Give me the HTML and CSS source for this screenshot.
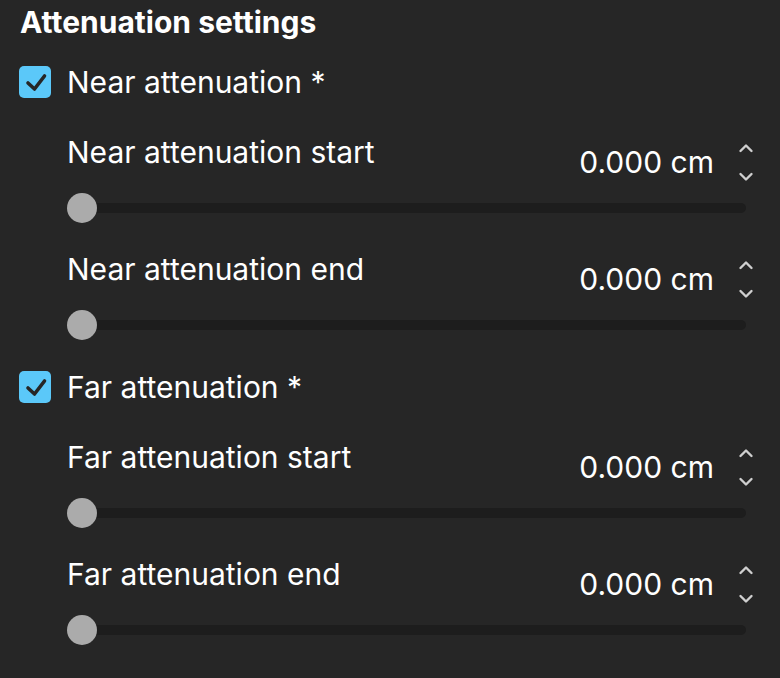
FILE: index.html
```html
<!DOCTYPE html>
<html>
<head>
<meta charset="utf-8">
<link rel="stylesheet" href="styles.css">
</head>
<body>
<div class="panel">
  <h2 class="title">Attenuation settings</h2>

  <div class="check-row">
    <span class="checkbox"><svg viewBox="0 0 32 32" width="32" height="32"><path d="M9 17 L15.5 23 L25.5 10" fill="none" stroke="#262626" stroke-width="3.6" stroke-linecap="round" stroke-linejoin="round"/></svg></span>
    <span class="check-label">Near attenuation *</span>
  </div>

  <div class="field">
    <div class="field-head">
      <span class="field-label">Near attenuation start</span>
      <span class="field-value">0.000 cm</span>
      <span class="spinner">
        <svg viewBox="0 0 16 10" width="16" height="10"><path d="M2.5 8 L8 2.5 L13.5 8" fill="none" stroke="#cfcfcf" stroke-width="2.4" stroke-linecap="round" stroke-linejoin="round"/></svg>
        <svg viewBox="0 0 16 10" width="16" height="10"><path d="M2.5 2 L8 7.5 L13.5 2" fill="none" stroke="#cfcfcf" stroke-width="2.4" stroke-linecap="round" stroke-linejoin="round"/></svg>
      </span>
    </div>
    <div class="slider"><span class="track"></span><span class="thumb"></span></div>
  </div>

  <div class="field">
    <div class="field-head">
      <span class="field-label">Near attenuation end</span>
      <span class="field-value">0.000 cm</span>
      <span class="spinner">
        <svg viewBox="0 0 16 10" width="16" height="10"><path d="M2.5 8 L8 2.5 L13.5 8" fill="none" stroke="#cfcfcf" stroke-width="2.4" stroke-linecap="round" stroke-linejoin="round"/></svg>
        <svg viewBox="0 0 16 10" width="16" height="10"><path d="M2.5 2 L8 7.5 L13.5 2" fill="none" stroke="#cfcfcf" stroke-width="2.4" stroke-linecap="round" stroke-linejoin="round"/></svg>
      </span>
    </div>
    <div class="slider"><span class="track"></span><span class="thumb"></span></div>
  </div>

  <div class="check-row">
    <span class="checkbox"><svg viewBox="0 0 32 32" width="32" height="32"><path d="M9 17 L15.5 23 L25.5 10" fill="none" stroke="#262626" stroke-width="3.6" stroke-linecap="round" stroke-linejoin="round"/></svg></span>
    <span class="check-label">Far attenuation *</span>
  </div>

  <div class="field">
    <div class="field-head">
      <span class="field-label">Far attenuation start</span>
      <span class="field-value">0.000 cm</span>
      <span class="spinner">
        <svg viewBox="0 0 16 10" width="16" height="10"><path d="M2.5 8 L8 2.5 L13.5 8" fill="none" stroke="#cfcfcf" stroke-width="2.4" stroke-linecap="round" stroke-linejoin="round"/></svg>
        <svg viewBox="0 0 16 10" width="16" height="10"><path d="M2.5 2 L8 7.5 L13.5 2" fill="none" stroke="#cfcfcf" stroke-width="2.4" stroke-linecap="round" stroke-linejoin="round"/></svg>
      </span>
    </div>
    <div class="slider"><span class="track"></span><span class="thumb"></span></div>
  </div>

  <div class="field">
    <div class="field-head">
      <span class="field-label">Far attenuation end</span>
      <span class="field-value">0.000 cm</span>
      <span class="spinner">
        <svg viewBox="0 0 16 10" width="16" height="10"><path d="M2.5 8 L8 2.5 L13.5 8" fill="none" stroke="#cfcfcf" stroke-width="2.4" stroke-linecap="round" stroke-linejoin="round"/></svg>
        <svg viewBox="0 0 16 10" width="16" height="10"><path d="M2.5 2 L8 7.5 L13.5 2" fill="none" stroke="#cfcfcf" stroke-width="2.4" stroke-linecap="round" stroke-linejoin="round"/></svg>
      </span>
    </div>
    <div class="slider"><span class="track"></span><span class="thumb"></span></div>
  </div>
</div>
</body>
</html>
```

FILE: styles.css
```css
html, body {
  margin: 0;
  padding: 0;
  background: #262626;
}
body {
  font-family: Inter, "Noto Sans", sans-serif;
  color: #ffffff;
  width: 780px;
  height: 678px;
  overflow: hidden;
}
.panel {
  padding: 4px 28px 0 19px;
  display: flex;
  flex-direction: column;
}
.title {
  margin: 0 0 26px 1px;
  font-size: 30px;
  font-weight: 700;
  line-height: 36px;
  height: 36px;
}
.check-row {
  display: flex;
  align-items: center;
  height: 32px;
  gap: 16px;
  margin-bottom: 36px;
}
.checkbox {
  width: 32px;
  height: 32px;
  border-radius: 5px;
  background: #5bc8f9;
  display: block;
}
.checkbox svg { display: block; }
.check-label {
  font-size: 30px;
  line-height: 36px;
}
.field {
  padding-left: 48px;
  margin-bottom: 28px;
}
.field:nth-of-type(3) { margin-bottom: 31px; }
.field-head {
  display: flex;
  align-items: flex-start;
  height: 50px;
}
.field-label {
  font-size: 30px;
  line-height: 36px;
  flex: 1;
}
.field-value {
  font-size: 30px;
  line-height: 36px;
  margin-top: 10px;
}
.spinner {
  width: 38px;
  display: flex;
  flex-direction: column;
  align-items: flex-end;
  padding-top: 9px;
  gap: 19px;
}
.spinner svg { display: block; margin-right: -2px; }
.slider {
  position: relative;
  margin-top: 9px;
  height: 30px;
  margin-right: 6px;
  display: flex;
  align-items: center;
}
.track {
  flex: 1;
  height: 10px;
  border-radius: 5px;
  background: #1d1d1d;
}
.thumb {
  position: absolute;
  left: 0;
  top: 0;
  width: 30px;
  height: 30px;
  border-radius: 50%;
  background: #ababab;
}
```
